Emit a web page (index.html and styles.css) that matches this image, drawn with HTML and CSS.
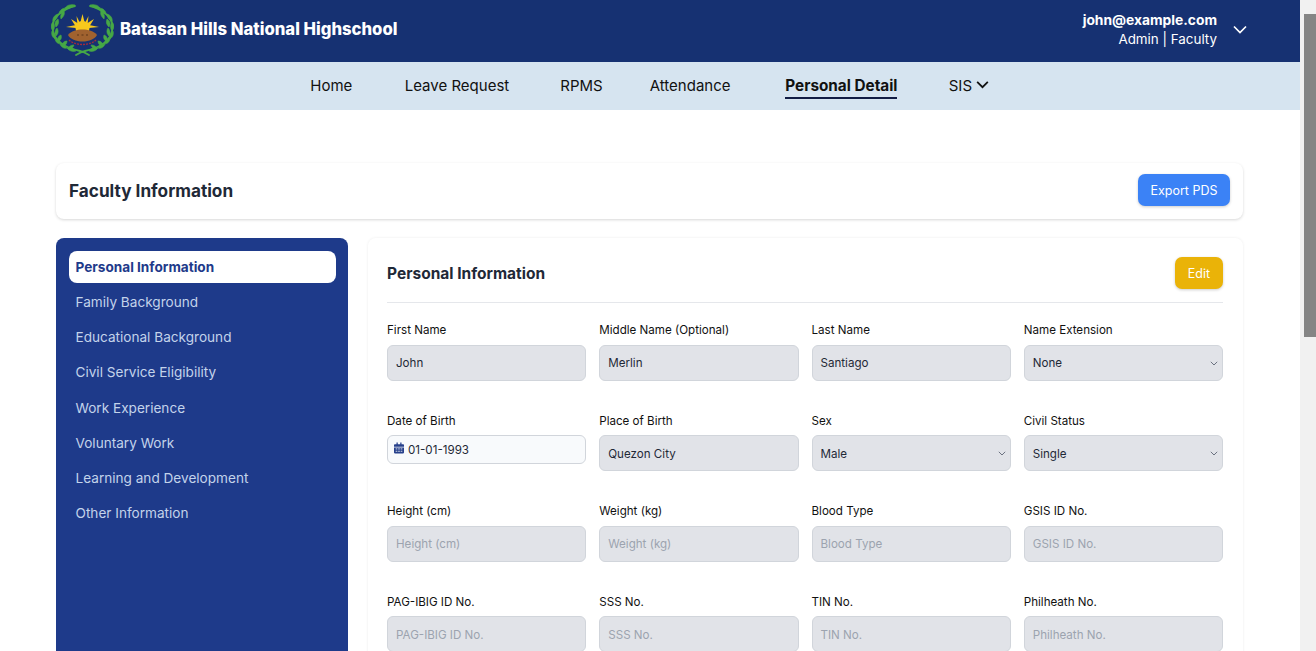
FILE: index.html
```html
<!DOCTYPE html>
<html lang="en">
<head>
<meta charset="utf-8">
<title>Personal Detail</title>
<link rel="stylesheet" href="styles.css">
</head>
<body>
<div class="viewport">
  <header class="topbar">
    <div class="brand">
      <svg class="logo" viewBox="0 0 63 52" width="63" height="52" aria-hidden="true">
        <defs>
          <g id="wreath">
            <path d="M24 2C11 5 1 14 1.500 24 2 36 14 44 29 47c3 .6 5 1.500 9 4" fill="none" stroke="#46a846" stroke-width="1.800" stroke-linecap="round"/>
            <g fill="#46a846" stroke="#46a846" stroke-width=".6">
              <path d="M24 1c-3 3-7 4-10 3 2-3 6-4 10-3z"/>
              <path d="M15 4c-1 3-4 6-7 6 0-3 3-6 7-6z"/>
              <path d="M13 7c1 3 0 5-3 8-1-3 0-6 3-8z"/>
              <path d="M7 10c0 3-2 6-5 8-1-3 1-7 5-8z"/>
              <path d="M7 15c1 3 1 5-2 8-2-3-1-6 2-8z"/>
              <path d="M2 18c2 3 2 6 0 9-2-3-3-6 0-9z"/>
              <path d="M6 24c2 3 1 6-1 8-2-2-1-6 1-8z"/>
              <path d="M1 27c3 2 4 5 3 8-3-2-4-5-3-8z"/>
              <path d="M10 31c1 3 0 5-3 7-1-3 0-6 3-7z"/>
              <path d="M4 34c3 1 5 3 6 6-4 0-6-3-6-6z"/>
              <path d="M16 37c0 3-2 5-5 5 0-3 2-5 5-5z"/>
              <path d="M9 40c3 0 6 2 7 4-3 1-6-1-7-4z"/>
              <path d="M23 41c-1 3-3 4-6 4 1-3 3-4 6-4z"/>
              <path d="M16 44c4-1 7 0 9 3-3 1-7 0-9-3z"/>
            </g>
          </g>
        </defs>
        <use href="#wreath"/>
        <use href="#wreath" transform="matrix(-1 0 0 1 63 0)"/>
        <g fill="#f7c91d">
          <path d="M31.500 10l-2.500 10h5z"/>
          <path d="M25.500 12l1 9 3-1z"/>
          <path d="M37.500 12l-1 9-3-1z"/>
          <path d="M20 15l5 8 3-3z"/>
          <path d="M43 15l-5 8-3-3z"/>
          <path d="M15 23l10-2v3z"/>
          <path d="M48 23l-10-2v3z"/>
          <circle cx="31.500" cy="24" r="7"/>
        </g>
        <path d="M17 31C20 27 26 25.500 31.500 25.500 37 25.500 43 27 46 31 44 35 38 37.500 31.500 37.500 25 37.500 19 35 17 31z" fill="#a0622f"/>
        <path d="M26 31h2M30.500 31h2M35 31h2" stroke="#5a3418" stroke-width="1.200"/>
        <path d="M18 36c6 6 21 6 27 0" fill="none" stroke="#a52a3a" stroke-width="1.300" stroke-dasharray="2 1"/>
      </svg>
      <span class="school">Batasan Hills National Highschool</span>
    </div>
    <div class="account">
      <div class="who">
        <div class="email">john@example.com</div>
        <div class="role">Admin | Faculty</div>
      </div>
      <svg class="chev" viewBox="0 0 14 9" width="14" height="9" aria-hidden="true"><path d="M1 1.500l6 6 6-6" fill="none" stroke="#fff" stroke-width="1.700"/></svg>
    </div>
  </header>
  <nav class="nav">
    <a class="nav-item">Home</a>
    <a class="nav-item">Leave Request</a>
    <a class="nav-item">RPMS</a>
    <a class="nav-item">Attendance</a>
    <a class="nav-item active">Personal Detail</a>
    <a class="nav-item sis">SIS<svg viewBox="0 0 14 9" width="13" height="8" aria-hidden="true"><path d="M1 1l6 6 6-6" fill="none" stroke="#111" stroke-width="2"/></svg></a>
  </nav>
  <main class="page">
    <section class="titlebar">
      <h1>Faculty Information</h1>
      <button class="btn blue">Export PDS</button>
    </section>
    <div class="columns">
      <aside class="side">
        <a class="side-item current">Personal Information</a>
        <a class="side-item">Family Background</a>
        <a class="side-item">Educational Background</a>
        <a class="side-item">Civil Service Eligibility</a>
        <a class="side-item">Work Experience</a>
        <a class="side-item">Voluntary Work</a>
        <a class="side-item">Learning and Development</a>
        <a class="side-item">Other Information</a>
      </aside>
      <section class="card">
        <div class="card-head">
          <h2>Personal Information</h2>
          <button class="btn yellow">Edit</button>
        </div>
        <div class="grid">
          <div class="field"><label>First Name</label><div class="input">John</div></div>
          <div class="field"><label>Middle Name (Optional)</label><div class="input">Merlin</div></div>
          <div class="field"><label>Last Name</label><div class="input">Santiago</div></div>
          <div class="field"><label>Name Extension</label><div class="input select">None<svg viewBox="0 0 8 5" width="8" height="5"><path d="M.8.8L4 4 7.200.8" fill="none" stroke="#6b7280" stroke-width="1"/></svg></div></div>

          <div class="field"><label>Date of Birth</label>
            <div class="input date">
              <svg viewBox="0 0 12 13" width="10" height="12" aria-hidden="true"><path d="M3 0h1.500v2h3V0H9v2h2a1 1 0 0 1 1 1v2H0V3a1 1 0 0 1 1-1h2zM0 6h12v6a1 1 0 0 1-1 1H1a1 1 0 0 1-1-1z" fill="#27408b"/><path d="M2 7.600h2M5 7.600h2M8 7.600h2M2 10.400h2M5 10.400h2M8 10.400h2" stroke="#f8fafc" stroke-width="1"/></svg>
              <span>01-01-1993</span>
            </div>
          </div>
          <div class="field"><label>Place of Birth</label><div class="input">Quezon City</div></div>
          <div class="field"><label>Sex</label><div class="input select">Male<svg viewBox="0 0 8 5" width="8" height="5"><path d="M.8.8L4 4 7.200.8" fill="none" stroke="#6b7280" stroke-width="1"/></svg></div></div>
          <div class="field"><label>Civil Status</label><div class="input select">Single<svg viewBox="0 0 8 5" width="8" height="5"><path d="M.8.8L4 4 7.200.8" fill="none" stroke="#6b7280" stroke-width="1"/></svg></div></div>

          <div class="field"><label>Height (cm)</label><div class="input empty">Height (cm)</div></div>
          <div class="field"><label>Weight (kg)</label><div class="input empty">Weight (kg)</div></div>
          <div class="field"><label>Blood Type</label><div class="input empty">Blood Type</div></div>
          <div class="field"><label>GSIS ID No.</label><div class="input empty">GSIS ID No.</div></div>

          <div class="field"><label>PAG-IBIG ID No.</label><div class="input empty">PAG-IBIG ID No.</div></div>
          <div class="field"><label>SSS No.</label><div class="input empty">SSS No.</div></div>
          <div class="field"><label>TIN No.</label><div class="input empty">TIN No.</div></div>
          <div class="field"><label>Philheath No.</label><div class="input empty">Philheath No.</div></div>
        </div>
      </section>
    </div>
  </main>
</div>
<div class="scrollbar"><div class="thumb"></div></div>
</body>
</html>
```
FILE: styles.css
```css
* { box-sizing: border-box; }
html, body { margin: 0; height: 651px; overflow: hidden; }
body { display: flex; background: #fff; font-family: Inter, "Noto Sans", sans-serif; color: #111827; }
.viewport { width: 1300px; height: 651px; overflow: hidden; flex: none; }
.scrollbar { width: 16px; height: 651px; background: #f1f1f1; padding: 14px 0 0 4px; flex: none; }
.thumb { height: 323px; background: #858585; }

.topbar { height: 62px; background: #163172; display: flex; justify-content: space-between; align-items: center; padding: 0 53px 0 51px; color: #fff; }
.brand { display: flex; align-items: center; gap: 6px; margin-top: -4px; }
.logo { margin-top: 1px; }
.school { font-size: 16.700px; font-weight: 800; }
.account { display: flex; align-items: center; gap: 16px; }
.who { text-align: right; line-height: 19px; padding-bottom: 3px; }
.email { font-size: 13.800px; font-weight: 700; }
.role { font-size: 13.400px; }
.chev { margin-top: -3px; }

.nav { height: 48px; background: #d6e4f0; display: grid; grid-template-columns: 43px 104px 38px 84px 112px 38px; column-gap: 51.500px; justify-content: center; align-items: center; padding-right: 3px; }
.nav-item { font-size: 15px; color: #111; line-height: 22px; white-space: nowrap; }
.nav-item.active { font-size: 15.300px; font-weight: 700; border-bottom: 2px solid #111c44; margin-top: 2px; }
.sis { display: flex; align-items: center; gap: 4px; }
.sis svg { margin-top: -3px; flex: none; }

.page { padding: 53px 57px 0 56px; }
.titlebar { height: 56px; border-radius: 8px; box-shadow: 0 1px 3px rgba(0,0,0,.16); display: flex; justify-content: space-between; align-items: center; padding: 0 13px 2px; }
h1 { margin: 0; font-size: 17.200px; font-weight: 700; color: #1f2937; }
.btn { border: 0; border-radius: 7px; color: #fff; font: 12.500px Inter, sans-serif; height: 32px; box-shadow: 0 1px 3px rgba(0,0,0,.2); }
.btn.blue { background: #3b82f6; width: 92px; }
.btn.yellow { background: #eab308; width: 48px; }

.columns { display: flex; gap: 20px; margin-top: 19px; align-items: flex-start; }
.side { width: 292px; height: 440px; flex: none; background: #1e3a8a; border-radius: 8px; padding: 13px 12px 0 13px; display: flex; flex-direction: column; gap: 3px; }
.side-item { height: 32.150px; border-radius: 8px; padding-left: 6.500px; font-size: 13.600px; line-height: 32px; color: #c3d3ea; }
.side-item.current { background: #fff; color: #1e3a8a; font-weight: 700; }

.card { flex: 1; height: 440px; border-radius: 8px; box-shadow: 0 0 3px rgba(0,0,0,.08); padding: 19px 20px 0 19px; }
.card-head { height: 46px; border-bottom: 1px solid #e5e7eb; display: flex; justify-content: space-between; align-items: flex-start; }
h2 { margin: 6.500px 0 0; font-size: 15.500px; font-weight: 700; color: #1f2937; }
.grid { display: grid; grid-template-columns: repeat(4, 1fr); column-gap: 13px; margin-top: 19px; }
.field { height: 90.500px; }
label { display: block; font-size: 11.600px; line-height: 16px; color: #111; margin-bottom: 6.750px; }
.input { height: 36px; border: 1px solid #d1d5db; border-radius: 6px; background: #e1e3e8; padding: .9px 8px 0; font-size: 11.600px; line-height: 34px; color: #1f2937; display: flex; justify-content: space-between; align-items: center; }
.input.select svg { margin-right: -4px; }
.input.empty { color: #9ca3af; }
.input.date { height: 29px; background: #f8fafc; justify-content: flex-start; gap: 4px; padding: 1px 6px 0; }
.input.date svg { margin-top: -4px; }
```
